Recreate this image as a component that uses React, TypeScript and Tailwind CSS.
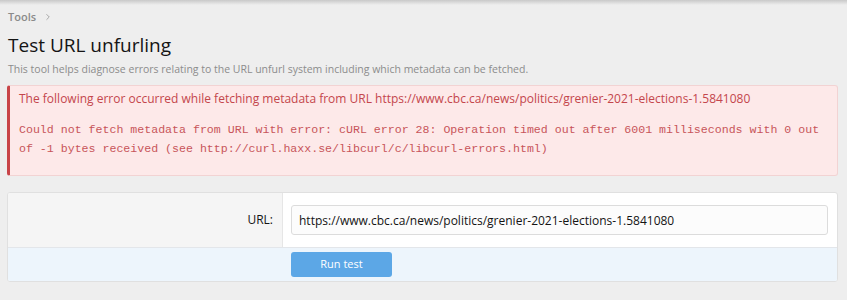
import React from 'react';
import { ChevronRight } from 'lucide-react';

const sans = { fontFamily: '"Open Sans", "Noto Sans", Arial, sans-serif' };

export default function App() {
    const url = 'https://www.cbc.ca/news/politics/grenier-2021-elections-1.5841080';
    return (
        <div className="min-h-[300px] w-full bg-[#eeeeee] relative" style={sans}>
            {/* top shadow strip */}
            <div className="absolute inset-x-0 top-0 h-[5px] bg-gradient-to-b from-[#c9c9c9] to-[#eeeeee]" />

            <div className="pl-[7px] pr-[9px] pt-[9px]">
                {/* Breadcrumb */}
                <div className="flex items-center gap-[7px] pl-[1px] text-[11px] font-semibold text-[#8a8a8a] leading-[16px]">
                    <span>Tools</span>
                    <ChevronRight size={10} strokeWidth={2} className="text-[#9a9a9a]" />
                </div>

                <h1 className="pl-[1px] mt-[7px] text-[19px] leading-[26px] text-[#141414]">Test URL unfurling</h1>

                <p className="pl-[1px] mt-[4px] text-[10.5px] leading-[14px] text-[#8c8c8c]">
                    This tool helps diagnose errors relating to the URL unfurl system including which metadata can be fetched.
                </p>

                {/* Error block */}
                <div className="mt-[9px] rounded-[3px] border border-[#f2d3d3] border-l-[3px] border-l-[#c84448] bg-[#fde9e9] pl-[9px] pr-[6px] pt-[5px] pb-[17px] text-[#c4464c]">
                    <div className="text-[12px] leading-[16px]">
                        The following error occurred while fetching metadata from URL {url}
                    </div>
                    <div
                        className="mt-[13px] text-[11.6px] leading-[19px] text-[#c8555a]"
                        style={{ fontFamily: '"Liberation Mono", "DejaVu Sans Mono", monospace' }}
                    >
                        Could not fetch metadata from URL with error: cURL error 28: Operation timed out after 6001 milliseconds with 0 out of -1 bytes received (see http://curl.haxx.se/libcurl/c/libcurl-errors.html)
                    </div>
                </div>

                {/* Form block */}
                <div className="mt-[16px] rounded-[3px] border border-[#e0e0e0] bg-white overflow-hidden">
                    <div className="flex">
                        <div className="w-[275px] shrink-0 bg-[#f5f5f5] border-r border-[#e6e6e6] flex items-center justify-end pr-[9px] text-[12px] text-[#141414]">
                            URL:
                        </div>
                        <div className="flex-1 pl-[8px] pr-[9px] py-[12px]">
                            <input
                                readOnly
                                value={url}
                                className="w-full h-[30px] rounded-[3px] border border-[#dcdcdc] bg-[#fcfcfc] px-[7px] text-[12px] text-[#141414] outline-none"
                                style={sans}
                            />
                        </div>
                    </div>
                    <div className="flex border-t border-[#e3e6ea] bg-[#edf5fc] py-[4px]">
                        <div className="w-[283px] shrink-0" />
                        <button className="h-[25px] w-[101px] rounded-[3px] bg-[#5ca7e6] text-[11px] text-white">
                            Run test
                        </button>
                    </div>
                </div>
            </div>
        </div>
    );
}
